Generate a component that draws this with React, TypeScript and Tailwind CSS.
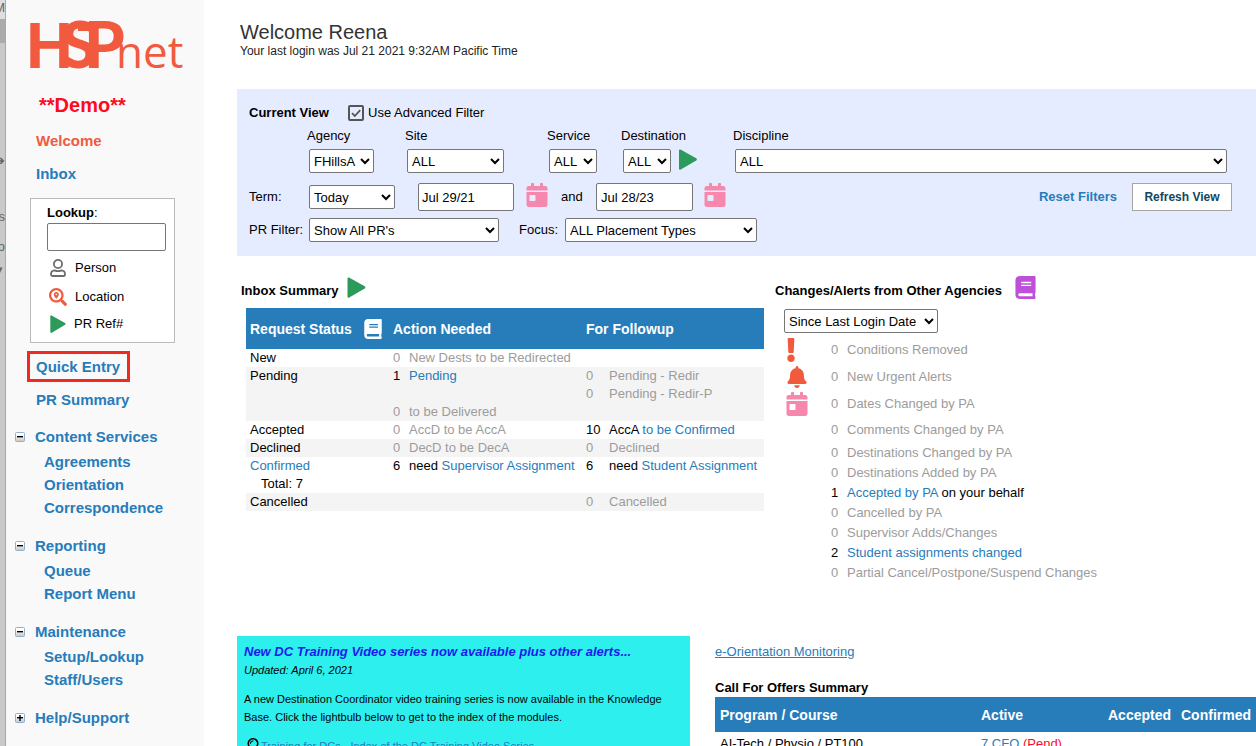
import type { ReactNode } from "react";
import {
  FaBell,
  FaBook,
  FaCalendarDay,
  FaExclamation,
  FaRegLightbulb,
  FaSearchLocation,
} from "react-icons/fa";

interface MenuGroup {
  title: string;
  open: boolean;
  items: string[];
}

interface AlertRow {
  count: number;
  label: string;
  link?: boolean;
  suffix?: string;
  icon?: ReactNode;
  height: string;
}

const menuGroups: MenuGroup[] = [
  {
    title: "Content Services",
    open: true,
    items: ["Agreements", "Orientation", "Correspondence"],
  },
  { title: "Reporting", open: true, items: ["Queue", "Report Menu"] },
  { title: "Maintenance", open: true, items: ["Setup/Lookup", "Staff/Users"] },
  { title: "Help/Support", open: false, items: [] },
];

const alertRows: AlertRow[] = [
  {
    count: 0,
    label: "Conditions Removed",
    icon: <FaExclamation className="size-6 -ml-[7px] text-[#f15a3c]" />,
    height: "h-[27px]",
  },
  {
    count: 0,
    label: "New Urgent Alerts",
    icon: <FaBell className="size-[22px] text-[#f15a3c]" />,
    height: "h-[27px]",
  },
  {
    count: 0,
    label: "Dates Changed by PA",
    icon: <FaCalendarDay className="size-6 -ml-px text-[#f688ae]" />,
    height: "h-[27px]",
  },
  { count: 0, label: "Comments Changed by PA", height: "h-[26px]" },
  { count: 0, label: "Destinations Changed by PA", height: "h-5" },
  { count: 0, label: "Destinations Added by PA", height: "h-5" },
  {
    count: 1,
    label: "Accepted by PA",
    link: true,
    suffix: "on your behalf",
    height: "h-5",
  },
  { count: 0, label: "Cancelled by PA", height: "h-5" },
  { count: 0, label: "Supervisor Adds/Changes", height: "h-5" },
  {
    count: 2,
    label: "Student assignments changed",
    link: true,
    height: "h-5",
  },
  { count: 0, label: "Partial Cancel/Postpone/Suspend Changes", height: "h-5" },
];

const PlayIcon = ({ className }: { className: string }) => (
  <svg viewBox="0 0 18 21" className={className} aria-hidden="true">
    <path
      d="M0 1.6Q0 0 1.5.5L17.2 9.3Q18.6 10.4 17.2 11.5L1.8 20.6Q0 21.4 0 19.6Z"
      fill="#2b9a5b"
    />
  </svg>
);

const PersonIcon = () => (
  <svg viewBox="0 0 18 18" className="size-[18px]" aria-hidden="true">
    <g fill="none" stroke="#6d6d6d" strokeWidth="1.8">
      <circle cx="9" cy="5" r="4.1" />
      <path d="M5.6 11.4Q9 13 12.4 11.4Q16 11.6 16 15.2Q16 17 14.6 17H3.4Q2 17 2 15.2Q2 11.6 5.6 11.4Z" />
    </g>
  </svg>
);

const ToggleIcon = ({ open }: { open: boolean }) => (
  <svg viewBox="0 0 10 10" className="size-[10px]" aria-hidden="true">
    <defs>
      <linearGradient id="toggleFill" x1="0" y1="0" x2="0" y2="1">
        <stop offset="0.3" stopColor="#fff" />
        <stop offset="1" stopColor="#c9c2b8" />
      </linearGradient>
    </defs>
    <rect x="0.5" y="0.5" width="9" height="9" rx="1" fill="url(#toggleFill)" stroke="#8fb0d0" />
    <rect x="2" y="4" width="6" height="1.4" fill="#000" />
    {!open && <rect x="4.3" y="2" width="1.4" height="6" fill="#000" />}
  </svg>
);

const Logo = () => (
  <svg viewBox="0 0 154 50" className="ml-6 block h-[50px] w-[154px]" role="img" aria-label="HSPnet">
    <g fill="#f15a3f">
      <text x="-4" y="48" fontFamily="'Liberation Sans', Arial, sans-serif" fontWeight="700" fontSize="65">
        H
      </text>
      <g fontFamily="Lato, 'Liberation Sans', sans-serif" fontWeight="900" fontSize="65">
        <text x="31" y="48">S</text>
        <text x="54" y="48">P</text>
      </g>
      {/* Band that joins the tops of the S and the P */}
      <rect x="48" y="2" width="16" height="9" />
      <text
        x="86"
        y="48"
        fontFamily="'Open Sans', 'Noto Sans', sans-serif"
        fontWeight="400"
        fontSize="44"
      >
        net
      </text>
    </g>
  </svg>
);

interface SelectProps {
  label: string;
  value: string;
  className: string;
}

const Select = ({ label, value, className }: SelectProps) => (
  <select
    aria-label={label}
    className={`h-6 shrink-0 rounded-[2px] border border-[#767676] bg-white text-black ${className}`}
  >
    <option>{value}</option>
  </select>
);

interface FilterFieldProps extends SelectProps {
  width: string;
  children?: ReactNode;
}

const FilterField = ({ label, value, className, width, children }: FilterFieldProps) => (
  <div className={width}>
    <div className="mb-[2px] leading-[22px]">{label}</div>
    <div className="flex items-start pl-[2px]">
      <Select label={label} value={value} className={className} />
      {children}
    </div>
  </div>
);

const Muted = ({ children }: { children: ReactNode }) => (
  <span className="text-[#9c9c9c]">{children}</span>
);

const TextLink = ({ children }: { children: ReactNode }) => (
  <a href="#" className="text-[#277cba]">
    {children}
  </a>
);

const Sidebar = () => (
  <aside className="w-[198px] shrink-0 bg-[#f9f9f9] pt-5 text-[15px] font-bold text-[#277cba]">
    <Logo />
    <div className="ml-[33px] mt-[23px] text-xl leading-6 text-[#fe0a1e]">**Demo**</div>
    <nav className="mt-[7px]">
      <a href="#" className="ml-[30px] block leading-[33px] text-[#f15a3f]">
        Welcome
      </a>
      <a href="#" className="ml-[30px] block leading-[33px]">
        Inbox
      </a>
    </nav>

    <form className="ml-6 mt-2 h-[145px] w-[145px] border border-[#bbb] bg-white pl-4 pt-1 text-[13px] font-normal text-black">
      <label htmlFor="lookup" className="block leading-5">
        <b>Lookup</b>:
      </label>
      <input
        id="lookup"
        type="text"
        className="block h-7 w-[119px] rounded-[2px] border border-[#767676] bg-white px-1"
      />
      <div className="mt-[2px] flex flex-col pl-[2px]">
        <button type="button" className="flex h-[29px] items-center gap-2">
          <PersonIcon />
          Person
        </button>
        <button type="button" className="flex h-[29px] items-center gap-2">
          <FaSearchLocation className="size-[18px] text-[#f15a3f]" />
          Location
        </button>
        <button type="button" className="flex h-[26px] items-center gap-2">
          <PlayIcon className="ml-px h-[18px] w-4" />
          PR Ref#
        </button>
      </div>
    </form>

    <a
      href="#"
      className="ml-[21px] mt-2 block h-[31px] w-[103px] border-3 border-[#f02a20] pl-[6px] leading-[25px]"
    >
      Quick Entry
    </a>
    <a href="#" className="ml-[30px] block leading-[35px]">
      PR Summary
    </a>

    <ul className="mt-[7px] flex flex-col gap-[14px]">
      {menuGroups.map((group) => (
        <li key={group.title} className="pl-[9px]">
          <div className="flex h-[26px] items-center gap-[10px]">
            <button type="button" aria-label={`Toggle ${group.title}`}>
              <ToggleIcon open={group.open} />
            </button>
            <a href="#">{group.title}</a>
          </div>
          {group.items.map((item) => (
            <a key={item} href="#" className="ml-[29px] block leading-[23px]">
              {item}
            </a>
          ))}
        </li>
      ))}
    </ul>
  </aside>
);

const FilterPanel = () => (
  <form className="mt-[31px] bg-[#e6ecff] pb-[14px] pl-3 pr-6 pt-3">
    <div className="flex h-6 items-center">
      <b className="w-[99px]">Current View</b>
      <label className="flex items-center gap-1">
        <span className="grid size-4 place-items-center">
          <input
            type="checkbox"
            defaultChecked
            className="peer col-start-1 row-start-1 size-4 appearance-none rounded-[2px] border-2 border-[#555]"
          />
          <svg
            viewBox="0 0 12 12"
            className="pointer-events-none invisible col-start-1 row-start-1 size-3 peer-checked:visible"
            aria-hidden="true"
          >
            <path d="M2 6.2L4.8 9L10.2 3.2" fill="none" stroke="#555" strokeWidth="1.8" />
          </svg>
        </span>
        Use Advanced Filter
      </label>
    </div>

    <div className="flex pl-[58px]">
      <FilterField label="Agency" value="FHillsA" width="w-[98px]" className="w-[65px]" />
      <FilterField label="Site" value="ALL" width="w-[142px]" className="w-[97px]" />
      <FilterField label="Service" value="ALL" width="w-[74px]" className="w-12" />
      <FilterField label="Destination" value="ALL" width="w-28" className="w-12">
        <button type="button" aria-label="Show destinations" className="ml-2">
          <PlayIcon className="h-[21px] w-[18px]" />
        </button>
      </FilterField>
      <FilterField label="Discipline" value="ALL" width="mr-[5px] flex-1" className="w-full" />
    </div>

    <div className="mt-[10px] flex h-7 items-center">
      <span className="w-[60px]">Term:</span>
      <Select label="Term" value="Today" className="mr-[23px] w-[86px]" />
      <input
        aria-label="Term start"
        defaultValue="Jul 29/21"
        className="h-7 w-24 rounded-[2px] border border-[#767676] bg-white px-[3px]"
      />
      <button type="button" aria-label="Pick start date" className="ml-[11px] self-start">
        <FaCalendarDay className="size-6 text-[#f688ae]" />
      </button>
      <span className="ml-3 w-[35px]">and</span>
      <input
        aria-label="Term end"
        defaultValue="Jul 28/23"
        className="h-7 w-[97px] rounded-[2px] border border-[#767676] bg-white px-1"
      />
      <button type="button" aria-label="Pick end date" className="ml-[10px] self-start">
        <FaCalendarDay className="size-6 text-[#f688ae]" />
      </button>
      <a href="#" className="ml-auto font-bold text-[#277cba]">
        Reset Filters
      </a>
      <button
        type="button"
        className="ml-[15px] h-7 w-[100px] border border-[#a5a5a5] bg-white text-xs font-bold text-[#12465c]"
      >
        Refresh View
      </button>
    </div>

    <div className="mt-[7px] flex items-center">
      <span className="w-[60px]">PR Filter:</span>
      <Select label="PR Filter" value="Show All PR's" className="mr-5 w-[190px]" />
      <span className="w-[46px]">Focus:</span>
      <Select label="Focus" value="ALL Placement Types" className="w-48" />
    </div>
  </form>
);

const InboxSummary = () => (
  <section className="w-[527px] shrink-0 pl-1">
    <h2 className="flex h-6 gap-2 font-bold leading-[30px]">
      Inbox Summary
      <PlayIcon className="mt-px h-[21px] w-[19px]" />
    </h2>
    <table className="ml-[5px] mt-2 w-[518px] table-fixed text-left leading-[18px] [&_td]:py-0 [&_td]:pl-1 [&_td]:align-top">
      <colgroup>
        <col className="w-[143px]" />
        <col className="w-4" />
        <col className="w-[177px]" />
        <col className="w-[23px]" />
        <col />
      </colgroup>
      <thead>
        <tr className="h-[41px] bg-[#277cba] text-sm text-white">
          <th className="pl-1">
            <span className="flex items-center gap-[11px]">
              Request Status
              <FaBook className="size-5" />
            </span>
          </th>
          <th colSpan={2} className="pl-1">
            Action Needed
          </th>
          <th colSpan={2} className="pl-1">
            For Followup
          </th>
        </tr>
      </thead>
      <tbody>
        <tr>
          <td>New</td>
          <td><Muted>0</Muted></td>
          <td><Muted>New Dests to be Redirected</Muted></td>
          <td />
          <td />
        </tr>
        <tr className="bg-[#f4f4f4]">
          <td>Pending</td>
          <td>
            1<br />
            <br />
            <Muted>0</Muted>
          </td>
          <td>
            <TextLink>Pending</TextLink>
            <br />
            <br />
            <Muted>to be Delivered</Muted>
          </td>
          <td>
            <Muted>0<br />0</Muted>
          </td>
          <td>
            <Muted>Pending - Redir<br />Pending - Redir-P</Muted>
          </td>
        </tr>
        <tr>
          <td>Accepted</td>
          <td><Muted>0</Muted></td>
          <td><Muted>AccD to be AccA</Muted></td>
          <td>10</td>
          <td>AccA <TextLink>to be Confirmed</TextLink></td>
        </tr>
        <tr className="bg-[#f4f4f4]">
          <td>Declined</td>
          <td><Muted>0</Muted></td>
          <td><Muted>DecD to be DecA</Muted></td>
          <td><Muted>0</Muted></td>
          <td><Muted>Declined</Muted></td>
        </tr>
        <tr>
          <td>
            <TextLink>Confirmed</TextLink>
            <div className="pl-[11px]">Total: 7</div>
          </td>
          <td>6</td>
          <td className="whitespace-nowrap">need <TextLink>Supervisor Assignment</TextLink></td>
          <td>6</td>
          <td className="whitespace-nowrap">need <TextLink>Student Assignment</TextLink></td>
        </tr>
        <tr className="bg-[#f4f4f4]">
          <td>Cancelled</td>
          <td />
          <td />
          <td><Muted>0</Muted></td>
          <td><Muted>Cancelled</Muted></td>
        </tr>
      </tbody>
    </table>
  </section>
);

const AgencyAlerts = () => (
  <section className="min-w-0 flex-1 pl-[11px]">
    <h2 className="flex h-6 gap-3 font-bold leading-[30px]">
      Changes/Alerts from Other Agencies
      <FaBook className="size-[23px] text-[#bd4fd8]" />
    </h2>
    <div className="pl-[9px] pt-[9px]">
      <Select label="Changes since" value="Since Last Login Date" className="block w-[154px]" />
      <ul className="mt-[3px]">
        {alertRows.map((row) => (
          <li key={row.label} className={`flex items-center ${row.height}`}>
            <span className="w-[47px] pl-[2px]">{row.icon}</span>
            <span className="w-4">{row.count > 0 ? row.count : <Muted>0</Muted>}</span>
            <span>
              {row.link ? <TextLink>{row.label}</TextLink> : <Muted>{row.label}</Muted>}
              {row.suffix && ` ${row.suffix}`}
            </span>
          </li>
        ))}
      </ul>
    </div>
  </section>
);

const Announcement = () => (
  <article className="w-[453px] shrink-0 bg-[#2df0ee] px-[7px] pb-6 pt-[7px] text-[11px] leading-[18px]">
    <h2 className="text-[13px] font-bold italic leading-[18px] text-[#1a1af0]">
      New DC Training Video series now available plus other alerts...
    </h2>
    <p className="italic">Updated: April 6, 2021</p>
    <p className="mt-[11px]">
      A new Destination Coordinator video training series is now available in the Knowledge Base.
      Click the lightbulb below to get to the index of the modules.
    </p>
    <p className="mt-[11px] flex items-center pl-px">
      <FaRegLightbulb className="size-4" />
      <TextLink>Training for DCs - Index of the DC Training Video Series</TextLink>
    </p>
  </article>
);

const CallForOffers = () => (
  <section className="min-w-0 flex-1 pl-[25px] pt-[7px]">
    <a href="#" className="block leading-[18px] text-[#277cba] underline">
      e-Orientation Monitoring
    </a>
    <h2 className="mt-[18px] font-bold leading-[18px]">Call For Offers Summary</h2>
    <table className="w-full table-fixed text-left leading-[18px]">
      <colgroup>
        <col className="w-[261px]" />
        <col className="w-[127px]" />
        <col className="w-[74px]" />
        <col />
      </colgroup>
      <thead>
        <tr className="h-[35px] bg-[#277cba] text-sm text-white">
          <th className="pl-[5px]">Program / Course</th>
          <th className="pl-[5px]">Active</th>
          <th className="pl-[5px]">Accepted</th>
          <th className="pl-1">Confirmed</th>
        </tr>
      </thead>
      <tbody>
        <tr>
          <td className="pl-[5px] pt-[3px]">AI-Tech / Physio / PT100</td>
          <td className="pl-[5px] pt-[3px]">
            <TextLink>7 CFO</TextLink> <span className="text-[#fe0a1e]">(Pend)</span>
          </td>
          <td />
          <td />
        </tr>
      </tbody>
    </table>
  </section>
);

const App = () => {
  return (
    <div className="flex h-screen overflow-hidden bg-white font-['Liberation_Sans',Arial,sans-serif] text-[13px] text-black">
      {/* Edge of the window underneath */}
      <div
        aria-hidden="true"
        className="flex w-[6px] shrink-0 flex-col items-end overflow-hidden border-r border-[#a8a8a8] bg-[#c9c9c9] text-[13px] leading-5 text-[#666]"
      >
        <span className="flex h-[19px] w-full justify-end bg-[#dedede] leading-4">M</span>
        <span className="h-6 w-full bg-[#ababab]" />
        <span className="mt-[108px]">➔</span>
        <span className="mt-9">s</span>
        <span className="mt-[10px]">o</span>
        <span className="mt-1">▼</span>
      </div>

      <Sidebar />

      <main className="min-w-0 flex-1 pl-[33px] pt-5">
        <header className="pl-[3px]">
          <h1 className="text-xl leading-6 text-[#333]">Welcome Reena</h1>
          <p className="text-xs leading-[14px] text-[#222]">
            Your last login was Jul 21 2021 9:32AM Pacific Time
          </p>
        </header>
        <FilterPanel />
        <div className="mt-5 flex">
          <InboxSummary />
          <AgencyAlerts />
        </div>
        <div className="mt-[53px] flex">
          <Announcement />
          <CallForOffers />
        </div>
      </main>
    </div>
  );
};

export default App;
